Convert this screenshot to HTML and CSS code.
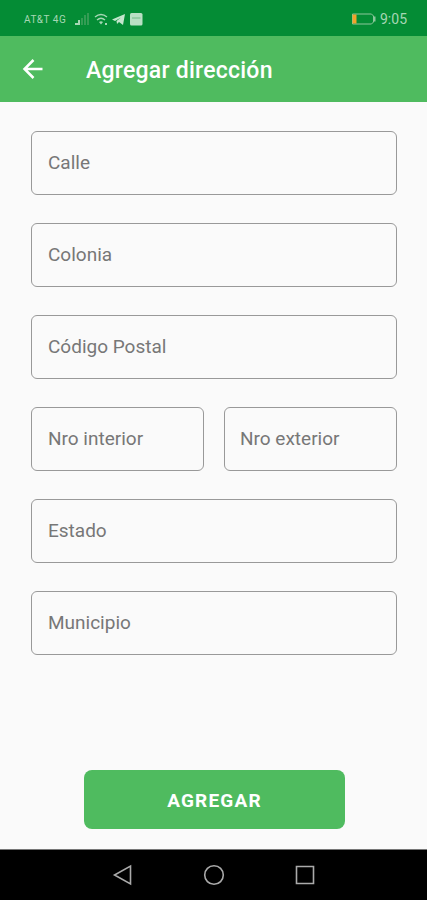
FILE: index.html
```html
<!DOCTYPE html>
<html lang="es">
<head>
<meta charset="utf-8">
<title>Agregar dirección</title>
<link rel="stylesheet" href="styles.css">
</head>
<body>
<div class="status">
  <span class="carrier">AT&amp;T 4G</span>
  <svg class="status-icons" width="72" height="16" viewBox="0 0 72 16">
    <path fill="#a6d7b4" d="M1 12h3v2H1zM4 9h2v5H4z"/>
    <path fill="#349c54" d="M7 7h2v7H7zM10 4h2v10h-2zM13 2h2v12h-2z"/>
    <g fill="none" stroke="#a6d7b4" stroke-width="1.400"><path d="M21 6q6-5 12 0M23 9q4-3.500 8 0"/></g>
    <path fill="#a6d7b4" d="M25 11q2-1.500 4 0l-2 2.500zM31 12h2v2h-2z"/>
    <path fill="#c4e6cd" d="M38 8.500L51 3l-2 11-4-3-2 2-.5-3L47 6.500 41 10z"/>
    <rect x="56" y="2" width="12.500" height="12.500" rx="1.500" fill="#b9e0c4"/>
    <path d="M58 7h8.500" stroke="#8ac79b" stroke-width="1.500"/>
  </svg>
  <svg class="battery" width="26" height="12" viewBox="0 0 26 12"><path d="M1.500 1h19l2 2v6l-2 2h-19z" fill="none" stroke="#8cc69b"/><path fill="#f2a32a" d="M1.500 1.500h4v9h-4z"/><path fill="#8cc69b" d="M23 3.500h1.500v5H23z"/></svg>
  <span class="time">9:05</span>
</div>
<header class="appbar">
  <svg width="24" height="24" viewBox="0 0 24 24"><path d="M21.500 12H3.500M12.500 3L3.500 12l9 9" fill="none" stroke="#fff" stroke-width="2.500"/></svg>
  <h1>Agregar dirección</h1>
</header>
<main class="form">
  <div class="field">Calle</div>
  <div class="field">Colonia</div>
  <div class="field">Código Postal</div>
  <div class="row"><div class="field">Nro interior</div><div class="field">Nro exterior</div></div>
  <div class="field">Estado</div>
  <div class="field">Municipio</div>
  <button class="submit">AGREGAR</button>
</main>
<nav class="navbar">
  <svg width="22" height="22" viewBox="0 0 22 22"><path d="M18.500 2v18L2.500 11z"/></svg>
  <svg width="22" height="22" viewBox="0 0 22 22"><circle cx="11" cy="11" r="9.300"/></svg>
  <svg width="22" height="22" viewBox="0 0 22 22"><path d="M2.500 2.500h17v17h-17z"/></svg>
</nav>
</body>
</html>
```
FILE: styles.css
```css
* { box-sizing: border-box; }
body { margin: 0; height: 900px; display: flex; flex-direction: column; background: #fafafa; font-family: Roboto, sans-serif; overflow: hidden; }
.status { height: 36px; flex: none; display: flex; align-items: center; padding: 2px 20px 0 24px; background: #048c35; color: #a6d7b4; }
.carrier { font-size: 10px; letter-spacing: .5px; width: 50px; white-space: nowrap; }
.battery { margin-left: auto; margin-right: 3px; }
.time { font-size: 14px; }
.appbar { height: 66px; flex: none; display: flex; align-items: center; padding: 0 21px; background: #4fbb5f; color: #fff; }
.appbar h1 { margin: 3px 0 0 41px; font-size: 23px; font-weight: 500; line-height: 30px; letter-spacing: .24px; white-space: nowrap; }
.form { flex: 1; display: flex; flex-direction: column; gap: 28px; padding: 29px 30px 0 31px; }
.field { height: 64px; flex: none; border: 1px solid #999; border-radius: 6px; padding: 0 16px; font-size: 19px; line-height: 61px; color: #777; letter-spacing: 0; }
.row { display: grid; grid-template-columns: 173px 173px; justify-content: space-between; }
.row .field:last-child { padding-left: 15px; }
.submit { align-self: center; width: 261px; height: 59px; margin-top: 87px; padding: 2px 0 0 1px; border: 0; border-radius: 8px; background: #4fbb5f; color: #fff; font: 700 19px Roboto, sans-serif; letter-spacing: 1.2px; }
.navbar { height: 51px; flex: none; display: flex; justify-content: center; gap: 69px; align-items: center; border-top: 1px solid #777; background: #000; }
.navbar svg { fill: none; stroke: #aaa; stroke-width: 1.6; }
```
